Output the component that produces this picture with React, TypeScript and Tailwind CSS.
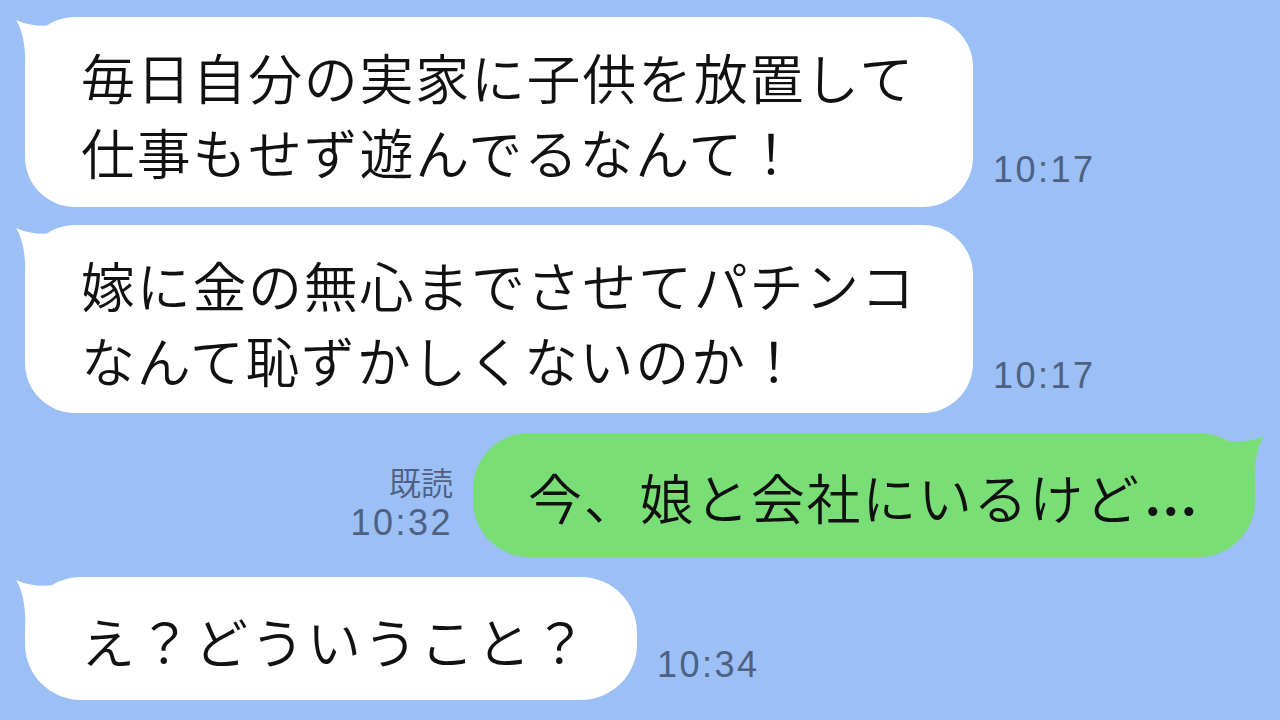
import React from "react";

const jp = { fontFamily: '"Noto Sans CJK JP", "Noto Sans", sans-serif' } as React.CSSProperties;

function Tail({ color, side }: { color: string; side: "left" | "right" }) {
  return (
    <svg
      width="70"
      height="60"
      viewBox="0 0 70 60"
      className={
        side === "left"
          ? "absolute left-[-10px] top-0"
          : "absolute right-[-10px] top-0 -scale-x-100"
      }
    >
      <path d="M66 0 Q30 16 1 3 Q12 20 10 58 L66 58 Z" fill={color} />
    </svg>
  );
}

function Time({ children, mb }: { children: React.ReactNode; mb: string }) {
  return (
    <div
      className={`text-[36px] leading-[40px] tracking-[2.5px] text-[#4d6183] ${mb}`}
      style={{ fontFamily: '"Liberation Sans", Arial, sans-serif' }}
    >
      {children}
    </div>
  );
}

export default function App() {
  return (
    <div
      className="w-[1280px] h-[720px] overflow-hidden bg-[#9cbff5] pt-[17px] flex flex-col"
      style={jp}
    >
      {/* Message 1 */}
      <div className="flex items-end pl-[25px]">
        <div className="relative w-[948px] h-[190px] rounded-[50px] bg-white">
          <Tail color="#ffffff" side="left" />
          <div className="relative pl-[56px] pt-[22px] text-[54px] font-[350] leading-[75px] tracking-[1.7px] text-[#111] whitespace-nowrap">
            毎日自分の実家に子供を放置して
            <br />
            仕事もせず遊んでるなんて！
          </div>
        </div>
        <div className="ml-[20px]">
          <Time mb="mb-[17px]">10:17</Time>
        </div>
      </div>

      {/* Message 2 */}
      <div className="flex items-end pl-[25px] mt-[18px]">
        <div className="relative w-[948px] h-[188px] rounded-[50px] bg-white">
          <Tail color="#ffffff" side="left" />
          <div className="relative pl-[56px] pt-[22px] text-[54px] font-[350] leading-[75px] tracking-[1.7px] text-[#111] whitespace-nowrap">
            嫁に金の無心までさせてパチンコ
            <br />
            なんて恥ずかしくないのか！
          </div>
        </div>
        <div className="ml-[20px]">
          <Time mb="mb-[17px]">10:17</Time>
        </div>
      </div>

      {/* Message 3 (own) */}
      <div className="flex items-end justify-end pr-[25px] mt-[20px]">
        <div className="mr-[20px] flex flex-col items-end mb-[14px]">
          <div className="text-[32px] font-[350] leading-[38px] mb-[3px] text-[#4d6183]">既読</div>
          <Time mb="mb-0">10:32</Time>
        </div>
        <div className="relative w-[782px] h-[124px] rounded-[56px] bg-[#79de76]">
          <Tail color="#79de76" side="right" />
          <div className="relative h-full flex items-center pl-[55px] pt-[3px] text-[54px] font-[350] leading-[75px] tracking-[1.7px] text-[#111] whitespace-nowrap">
            今、娘と会社にいるけど
            <span
              className="font-bold tracking-[1px] ml-[3px]"
              style={{ fontFamily: 'Inter, "Liberation Sans", Arial, sans-serif' }}
            >
              …
            </span>
          </div>
        </div>
      </div>

      {/* Message 4 */}
      <div className="flex items-end pl-[25px] mt-[20px]">
        <div className="relative w-[612px] h-[123px] rounded-[56px] bg-white">
          <Tail color="#ffffff" side="left" />
          <div className="relative h-full flex items-center pl-[56px] pt-[3px] text-[54px] font-[350] leading-[75px] tracking-[2.5px] text-[#111] whitespace-nowrap">
            え？どういうこと？
          </div>
        </div>
        <div className="ml-[20px]">
          <Time mb="mb-[15px]">10:34</Time>
        </div>
      </div>
    </div>
  );
}
